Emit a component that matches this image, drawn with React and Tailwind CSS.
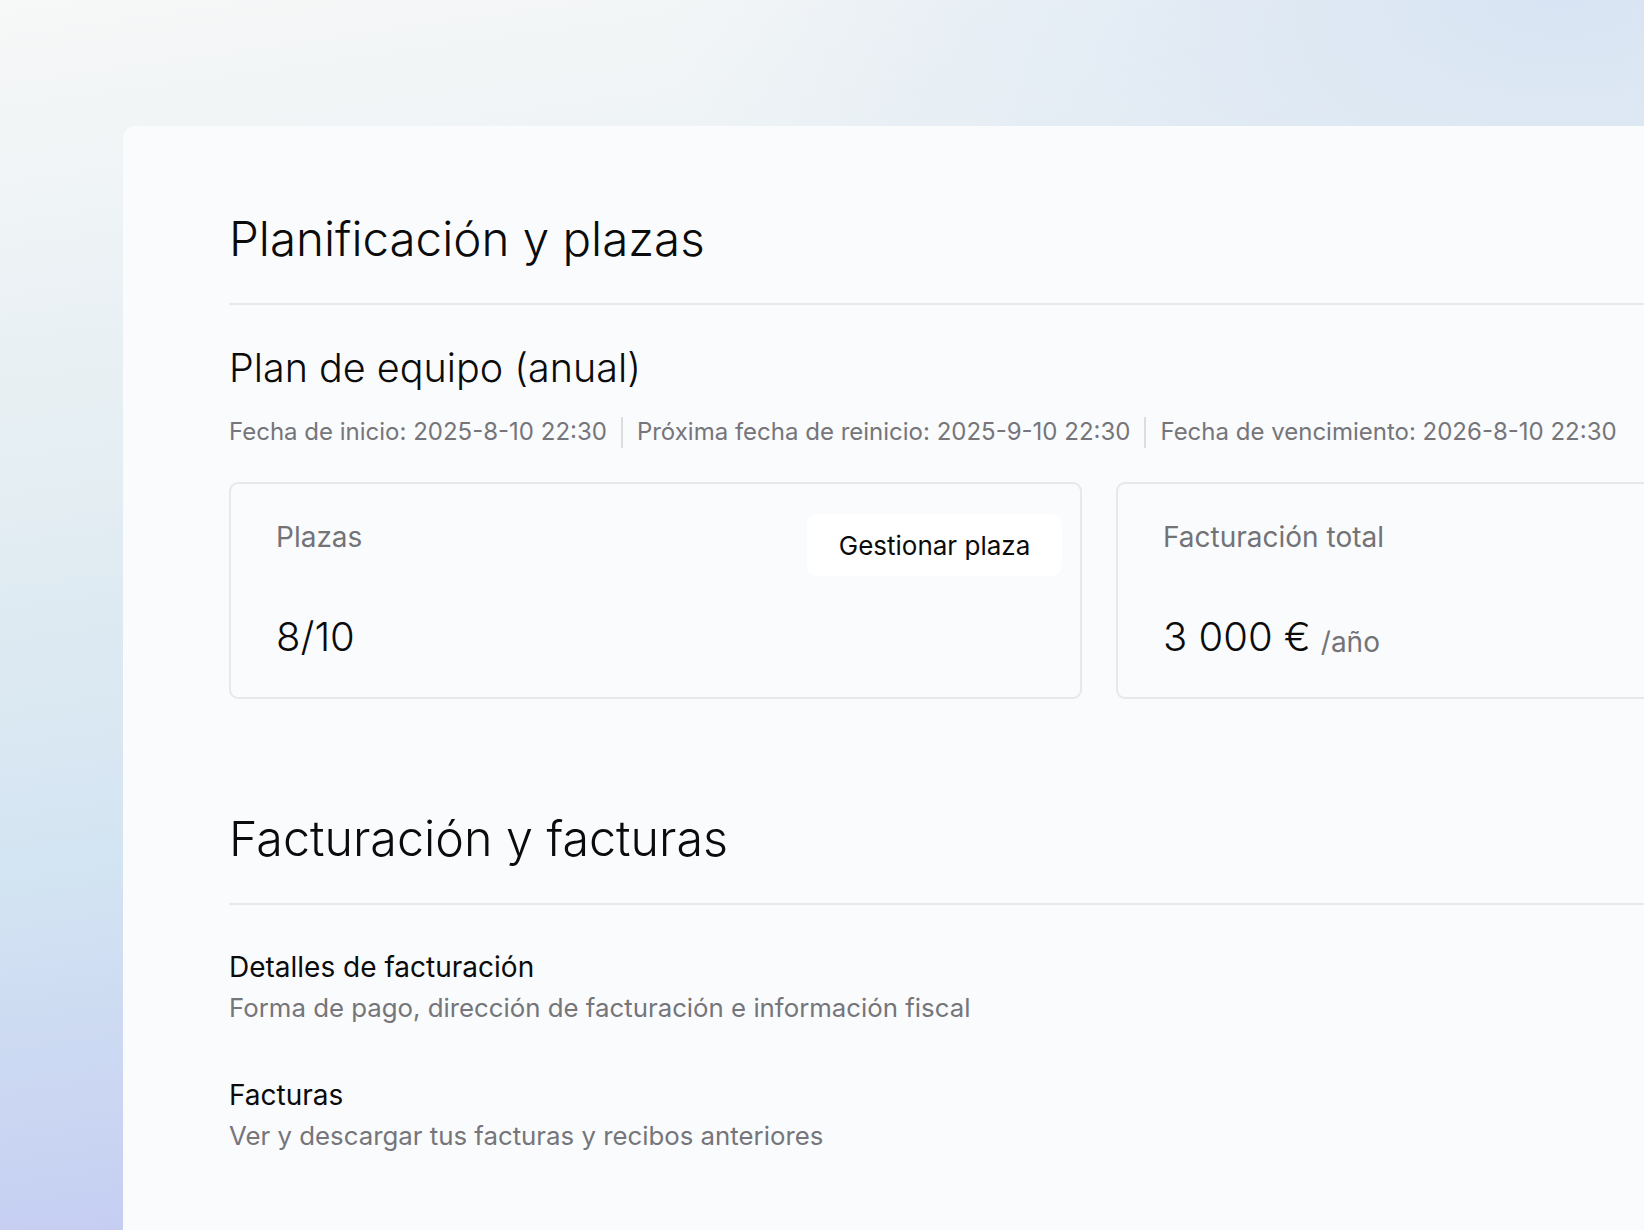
import React from 'react';

const dates = [
  'Fecha de inicio: 2025-8-10 22:30',
  'Próxima fecha de reinicio: 2025-9-10 22:30',
  'Fecha de vencimiento: 2026-8-10 22:30',
];

const billingLinks = [
  { title: 'Detalles de facturación', text: 'Forma de pago, dirección de facturación e información fiscal' },
  { title: 'Facturas', text: 'Ver y descargar tus facturas y recibos anteriores' },
];

// Section title with divider underneath
const SectionTitle = ({ children, size = 'text-[47.5px]' }) => (
  <div>
    <h1 className={`${size} leading-[56px] font-light text-[#0b0b0c]`}>{children}</h1>
    <div className="mt-[36px] h-[2px] bg-[#e8e9ec]" />
  </div>
);

const StatCard = ({ label, action, children }) => (
  <div className="w-[853px] h-[217px] shrink-0 rounded-[9px] border-2 border-[#e7e8eb] pl-[45px] pr-[18px] pt-[30px]">
    <div className="flex items-start justify-between h-[62px]">
      <span className="mt-[7px] text-[28px] leading-[32px] text-[#737377]">{label}</span>
      {action && (
        <button className="h-[62px] w-[255px] rounded-[10px] bg-white text-[26px] text-[#0b0b0c]">
          {action}
        </button>
      )}
    </div>
    <div className="mt-[37px] flex items-end gap-[10px]">{children}</div>
  </div>
);

export default function App() {
  return (
    <div className="h-[1230px] w-full overflow-hidden font-['Inter',sans-serif] bg-[image:radial-gradient(ellipse_900px_420px_at_95%_0%,#d8e4f3_0%,rgba(216,228,243,0)_100%),linear-gradient(172deg,#f7f8f8_0%,#e3edf2_35%,#d3e4f2_60%,#c4ccf2_88%)] pt-[126px] pl-[123px]">
      <div className="w-[1800px] h-[1200px] rounded-tl-[12px] bg-[#fafbfd] pl-[106px] pt-[85px]">
        <SectionTitle>Planificación y plazas</SectionTitle>

        <h2 className="mt-[40px] text-[39.5px] leading-[46px] font-light text-[#0b0b0c]">Plan de equipo (anual)</h2>
        <div className="mt-[25px] flex items-center text-[24px] leading-[32px] text-[#75757a]">
          {dates.map((d, i) => (
            <React.Fragment key={d}>
              {i > 0 && <span className="mx-[14px] h-[31px] w-[2px] bg-[#dcdde0]" />}
              <span>{d}</span>
            </React.Fragment>
          ))}
        </div>

        <div className="mt-[34px] flex gap-[34px]">
          <StatCard label="Plazas" action="Gestionar plaza">
            <span className="text-[40px] leading-[48px] font-light text-[#0b0b0c]">8/10</span>
          </StatCard>
          <StatCard label="Facturación total">
            <span className="text-[40px] leading-[48px] font-light text-[#0b0b0c]">3 000 €</span>
            <span className="text-[28px] leading-[38px] text-[#737377]">/año</span>
          </StatCard>
        </div>

        <div className="mt-[112px]">
          <SectionTitle size="text-[48.4px]">Facturación y facturas</SectionTitle>
        </div>

        <div className="mt-[45px] flex flex-col gap-[54px]">
          {billingLinks.map((l) => (
            <div key={l.title}>
              <div className="text-[28px] leading-[34px] text-[#0b0b0c]">{l.title}</div>
              <div className="mt-[8px] text-[25.8px] leading-[32px] text-[#75757a]">{l.text}</div>
            </div>
          ))}
        </div>
      </div>
    </div>
  );
}
